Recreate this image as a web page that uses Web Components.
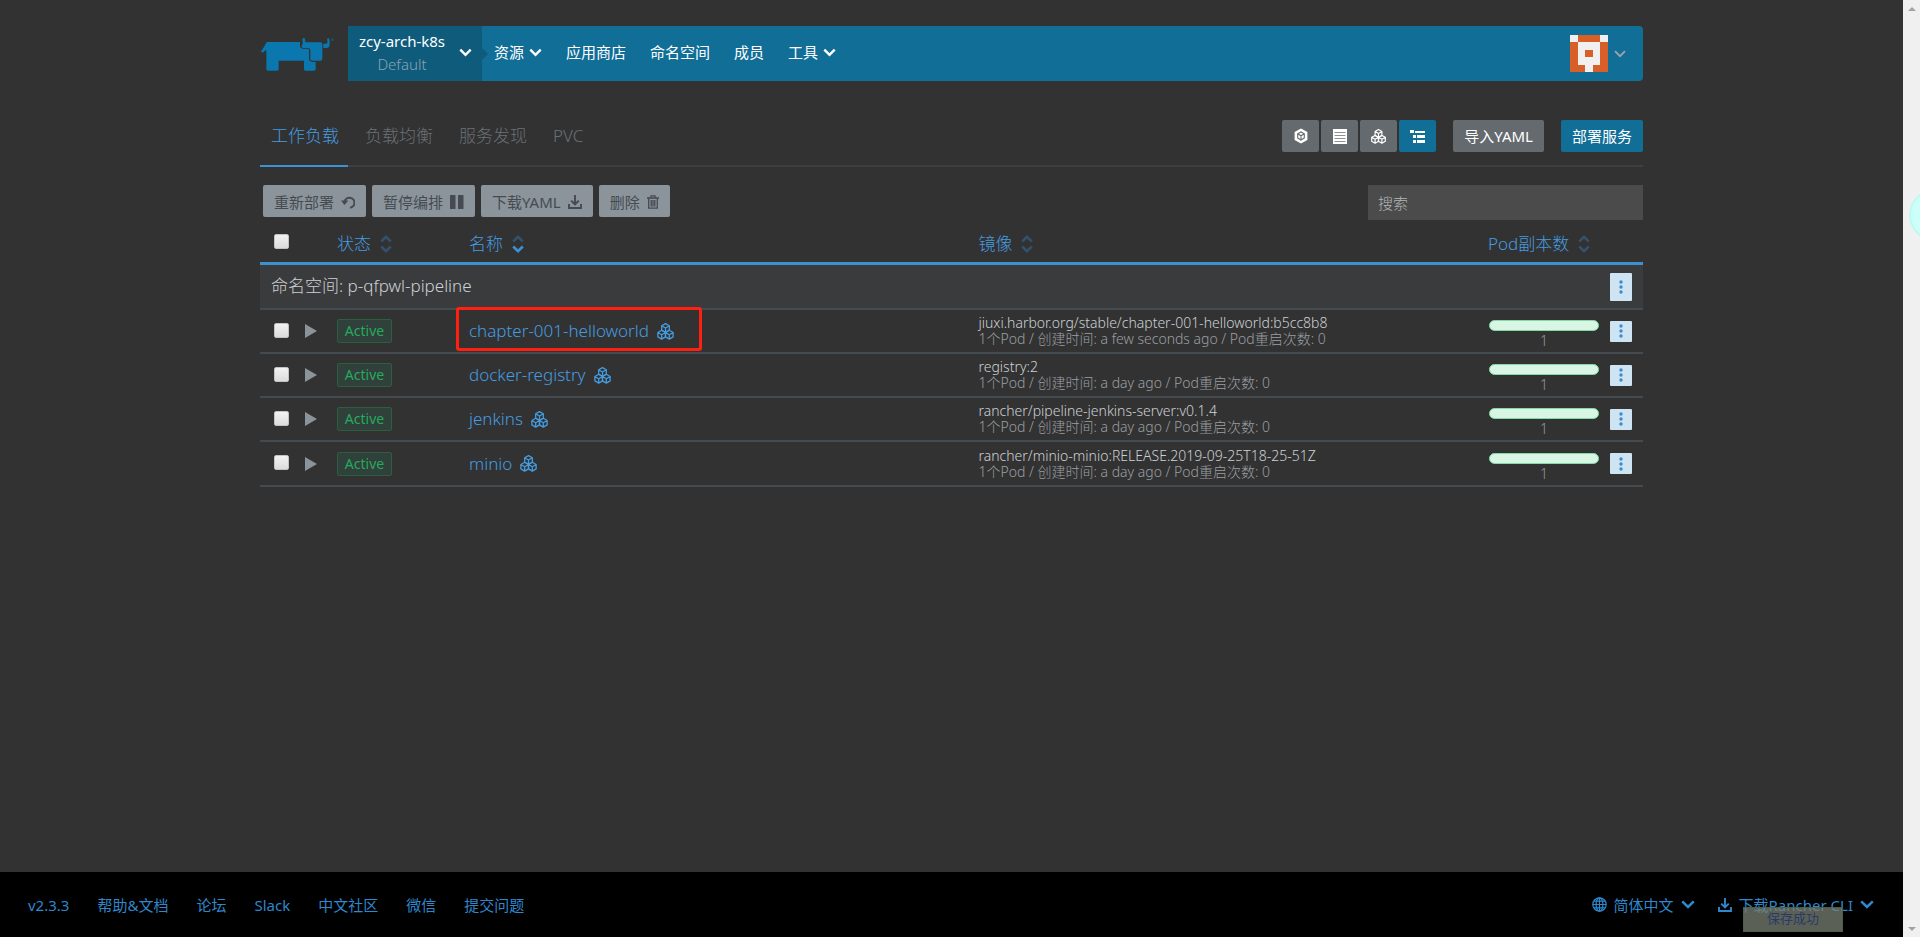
<!DOCTYPE html>
<html lang="zh-CN">
<head>
<meta charset="utf-8">
<title>Rancher</title>
<style>
html,body{margin:0;background:#323232}
body{font-family:"Noto Sans","Noto Sans CJK SC",sans-serif;font-size:15px;font-weight:300;color:#ccd1d4}
</style>
</head>
<body>
<rk-shell>
  <rk-header slot="head"></rk-header>
  <rk-tabs slot="head"></rk-tabs>
  <rk-toolbar slot="main"></rk-toolbar>
  <rk-table slot="main"></rk-table>
  <rk-footer slot="foot"></rk-footer>
  <rk-toast slot="foot">保存成功</rk-toast>
</rk-shell>
<script>
const hexCube = (x, y, r) => {
  const w = r * 0.87;
  return `<path d="M${x} ${y-r}L${x+w} ${y-r/2}V${y+r/2}L${x} ${y+r}L${x-w} ${y+r/2}V${y-r/2}ZM${x-w} ${y-r/2}L${x} ${y}L${x+w} ${y-r/2}M${x} ${y}V${y+r}"/>`;
};
const ICONS = {
  down: ['0 0 13 9', '<path d="M1.3 1.6L6.5 6.8L11.7 1.6" fill="none" stroke="currentColor" stroke-width="2.4"/>'],
  wide: ['0 0 14 9', '<path d="M1.2 1.4L7 7L12.8 1.4" fill="none" stroke="currentColor" stroke-width="2.6"/>'],
  thin: ['0 0 12 8', '<path d="M1 1.2L6 6.2L11 1.2" fill="none" stroke="currentColor" stroke-width="1.9"/>'],
  cubes: ['0 0 17 17', `<g fill="none" stroke="currentColor" stroke-width="1.3" stroke-linejoin="round">${hexCube(8.5,5,4.4)}${hexCube(4.7,11.7,4.4)}${hexCube(12.3,11.7,4.4)}</g>`],
  cubesm: ['0 0 15 15', `<g fill="none" stroke="currentColor" stroke-width="1.2" stroke-linejoin="round">${hexCube(7.5,4.5,3.9)}${hexCube(4.1,10.3,3.9)}${hexCube(10.9,10.3,3.9)}</g>`],
  cube: ['0 0 14 16', '<path fill="currentColor" d="M7 .6L13.4 4V12L7 15.4L.6 12V4Z"/><path fill="none" stroke="#646a6e" stroke-width="1.1" d="M7 4L10.3 5.8V10L7 12L3.7 10V5.8ZM3.7 5.8L7 7.8L10.3 5.8M7 7.8V12"/>'],
  list: ['0 0 14 15', '<path fill="currentColor" d="M0 0H14V15H0Z"/><path stroke="#8b9093" d="M1.5 3.5H12.5M1.5 6.5H12.5M1.5 9.5H12.5M1.5 12.5H12.5"/>'],
  tree: ['0 0 15 13', '<path fill="currentColor" d="M0 0H4V3H0ZM5 1H15V3H5ZM3 5H6V8H3ZM7 5H15V8H7ZM3 10H6V13H3ZM7 10H15V13H7Z"/>'],
  undo: ['0 0 14 13', '<path d="M3.6 5.5A5 5 0 1 1 9 11.7" fill="none" stroke="currentColor" stroke-width="2"/><path fill="currentColor" d="M0 4.6H7.4L3.4 9Z"/>'],
  pause: ['0 0 14 14', '<path fill="currentColor" d="M0 0H5.5V14H0ZM8 0H13.5V14H8Z"/>'],
  save: ['0 0 14 14', '<path d="M1 9V13H13V9M7 0V9M3.2 5.6L7 9.3L10.8 5.6" fill="none" stroke="currentColor" stroke-width="1.9"/>'],
  trash: ['0 0 12 14', '<path d="M0 3H12M4 2.6V.8H8V2.6M1.7 3.5V13.2H10.3V3.5M4.2 5V11.5M6 5V11.5M7.8 5V11.5" fill="none" stroke="currentColor" stroke-width="1.3"/>'],
  globe: ['0 0 15 15', '<g fill="none" stroke="currentColor" stroke-width="1.2"><circle cx="7.5" cy="7.5" r="6.7"/><ellipse cx="7.5" cy="7.5" rx="3.4" ry="6.7"/><path d="M7.5 .8V14.2M.8 7.5H14.2M1.8 4.2H13.2M1.8 10.8H13.2"/></g>'],
  dots: ['0 0 4 14', '<g fill="currentColor"><circle cx="2" cy="2" r="1.7"/><circle cx="2" cy="7" r="1.7"/><circle cx="2" cy="12" r="1.7"/></g>'],
  play: ['0 0 12 14', '<path fill="currentColor" d="M0 0L12 7L0 14Z"/>'],
  sort: ['0 0 12 18', '<g fill="none" stroke="currentColor" stroke-width="2.6"><path class="up" d="M1.2 6.5L6 1.9L10.8 6.5"/><path class="dn" d="M1.2 11.5L6 16.1L10.8 11.5"/></g>']
};
const base = `<style>
*{box-sizing:border-box}
a{color:inherit;text-decoration:none}
button{font:inherit;color:inherit;background:none;border:0;padding:0;margin:0;cursor:pointer}
</style>`;
function define(name, html) {
  const tpl = document.createElement('template');
  tpl.innerHTML = base + html;
  customElements.define(name, class extends HTMLElement {
    constructor() {
      super();
      this.attachShadow({mode: 'open'}).append(tpl.content.cloneNode(true));
    }
  });
}

customElements.define('rk-icon', class extends HTMLElement {
  connectedCallback() {
    if (this.shadowRoot) return;
    const [box, art] = ICONS[this.getAttribute('name')];
    const [, , w, h] = box.split(' ');
    this.attachShadow({mode: 'open'}).innerHTML = `<style>
      :host{display:inline-block;flex:none;line-height:0}
      svg{display:block}
      .up{stroke:var(--up,currentColor)}
    </style><svg width="${w}" height="${h}" viewBox="${box}" aria-hidden="true">${art}</svg>`;
  }
});

define('rk-shell', `<style>
:host{display:flex;min-height:100vh;position:relative;overflow:hidden}
.app{flex:1;min-width:0;display:flex;flex-direction:column}
.wrap{width:100%;max-width:1383px;margin:0 auto;flex:1}
.bar{width:17px;background:#f0f0f0;display:flex;flex-direction:column;justify-content:space-between;align-items:center;padding:7px 0 6px}
.bubble{position:absolute;right:-37px;top:190px;width:48px;height:50px;border-radius:50%;background:#cbfff8;border:2px solid #bdfaf2;box-sizing:border-box}
.foot{position:relative}
</style>
<div class="app">
  <div class="wrap"><slot name="head"></slot><main><slot name="main"></slot></main></div>
  <div class="foot"><slot name="foot"></slot></div>
</div>
<div class="bar" aria-hidden="true">
  <svg width="8" height="4"><path d="M0 4L4 0L8 4Z" fill="#a3a3a3"/></svg>
  <svg width="8" height="4"><path d="M0 0L4 4L8 0Z" fill="#a3a3a3"/></svg>
</div>
<div class="bubble"></div>`);

define('rk-header', `<style>
:host{display:flex;padding-top:26px;color:#fff;font-weight:400}
.logo{width:88px;height:55px;display:flex;align-items:center}
.nav{flex:1;display:flex;background:#116e97;border-radius:0 4px 4px 0;height:55px;padding-right:17px;align-items:center}
.cluster{position:relative;width:134px;height:55px;background:#0f5b7c;display:flex;align-items:center;padding:0 0 2px 9px;gap:12px;line-height:23px;text-align:center}
.cluster small{display:block;font-size:15px;font-weight:300;color:#8ba3b1}
.cluster::after{content:"";position:absolute;left:100%;top:22px;border:6px solid transparent;border-left-color:#0f5b7c;border-right:0}
nav{flex:1;display:flex;gap:24px;padding:0 0 3px 12px}
nav a,nav button{display:flex;align-items:center;gap:5px;line-height:22px}
.user{display:flex;align-items:center;gap:6px;color:#9aa5ab}
.name{width:90px;white-space:nowrap}
</style>
<a class="logo" href="#" aria-label="Rancher"><svg width="75" height="34" viewBox="30 64 225 102"><g fill="#0a78ae">
<path d="M50 79H150V92Q151 98 158 99H174Q179 100 177 108V130Q178 138 186 139H197V160Q197 165 192 165H167Q162 165 162 160V135H86V160Q86 165 81 165H54Q49 165 49 160V104Q45 104 40 110Q36 112 33 107Q37 101 42 94Z"/>
<path d="M160 66L165 69L166 80H211Q217 80 217 86V129Q217 135 211 135H187Q181 135 181 129V103Q180 97 173 97H160Q154 96 154 91Q160 85 157 72Z"/>
<path d="M220 84H229Q235 82 231 70L236 66Q239 75 239 82Q240 96 231 97H220Z"/></g>
<circle cx="247" cy="72" r="3" fill="none" stroke="#0a6996" stroke-width="2"/></svg></a>
<div class="nav">
<button class="cluster"><span class="name">zcy-arch-k8s<small>Default</small></span><rk-icon name="down"></rk-icon></button>
<nav><button>资源<rk-icon name="down"></rk-icon></button><a href="#">应用商店</a><a href="#">命名空间</a><a href="#">成员</a><button>工具<rk-icon name="down"></rk-icon></button></nav>
<button class="user" aria-label="用户"><svg width="38" height="37" viewBox="0 0 5 5" preserveAspectRatio="none" shape-rendering="crispEdges"><path fill="#f0f0f0" d="M0 0H5V5H0Z"/><path fill="#d95f28" d="M1 0H4V1H1ZM0 1H1V4H2V5H0ZM4 1H5V5H3V4H4ZM2 2H3V3H2Z"/></svg><rk-icon name="thin"></rk-icon></button>
</div>`);

define('rk-tabs', `<style>
:host{display:flex;box-sizing:border-box;height:86px;border-bottom:2px solid #3f3f3f;justify-content:space-between}
nav{display:flex;gap:6px;font-size:17px;color:#6a7175}
nav a{height:86px;padding:42px 9px 0 11px;line-height:26px;border-bottom:2px solid transparent}
nav a.on{color:#459ce0;border-color:#3d91d1}
.acts{display:flex;padding-top:39px;color:#fff;font-weight:400}
button{height:32px;background:#646a6e;border-radius:2px;line-height:22px;display:flex;align-items:center;justify-content:center}
.views{display:flex;gap:2px}
.views button{width:37px}
button.on{background:#116e97}
.txt{padding:0 11px;margin-left:17px}
</style>
<nav><a class="on" href="#">工作负载</a><a href="#">负载均衡</a><a href="#">服务发现</a><a href="#">PVC</a></nav>
<div class="acts"><div class="views">
<button aria-label="容器"><rk-icon name="cube"></rk-icon></button><button aria-label="列表"><rk-icon name="list"></rk-icon></button><button aria-label="工作负载"><rk-icon name="cubesm"></rk-icon></button><button class="on" aria-label="分组"><rk-icon name="tree"></rk-icon></button></div>
<button class="txt">导入YAML</button><button class="txt on">部署服务</button></div>`);

define('rk-toolbar', `<style>
:host{display:flex;justify-content:space-between;padding:18px 0 0 3px}
.acts{display:flex;gap:6px}
.acts button{height:32px;background:#8b949b;border-radius:2px;color:#454b50;font-weight:400;padding:0 11px;display:flex;align-items:center;gap:7px}
.acts rk-icon{margin-top:2px}
input{width:275px;height:35px;border:0;background:#4b4b4b;padding:0 10px;font:inherit;color:#c4c9cc;border-radius:0}
input::placeholder{color:#b2b7b9;opacity:1}
</style>
<div class="acts"><button>重新部署<rk-icon name="undo"></rk-icon></button><button>暂停编排<rk-icon name="pause"></rk-icon></button><button>下载YAML<rk-icon name="save"></rk-icon></button><button>删除<rk-icon name="trash"></rk-icon></button></div>
<input type="search" placeholder="搜索" aria-label="搜索">`);

const ROWS = [
  ['chapter-001-helloworld', 'jiuxi.harbor.org/stable/chapter-001-helloworld:b5cc8b8', 'a few seconds ago', true],
  ['docker-registry', 'registry:2', 'a day ago'],
  ['jenkins', 'rancher/pipeline-jenkins-server:v0.1.4', 'a day ago'],
  ['minio', 'rancher/minio-minio:RELEASE.2019-09-25T18-25-51Z', 'a day ago']
];
define('rk-table', `<style>
:host{display:block}
table{width:100%;table-layout:fixed;border-collapse:separate;border-spacing:0}
th,td{padding:0;text-align:left;font-weight:300;vertical-align:middle}
.c1{width:45px}.c2{width:32px}.c3{width:132px}.c6{width:122px}.c7{width:33px}
thead th{height:45px;border-bottom:3px solid #3d91d1;color:#459ce0;font-size:17px}
th button{display:flex;align-items:center;gap:9px;line-height:24px;white-space:nowrap;margin-top:6px}
th rk-icon{color:#34506a;--up:#34506a}
th .sorted{color:#3d91d1}
th input{margin-top:2px}
tbody td{height:44px;border-bottom:2px solid #434a50}
tbody tr:last-child td{height:45px}
.group td{height:45px;background:#3a3b3d;font-size:17px;line-height:24px}
.group td:first-child{padding:0 0 2px 11px}
input{appearance:none;display:block;width:15px;height:15px;margin:0 0 2px 14px;border-radius:2px;background:linear-gradient(#f2f2f2,#dcdcdc);border:1px solid #c3c3c3}
.play{color:#8b949b;display:block;margin-top:2px}
.badge{display:block;width:55px;height:24px;line-height:21px;text-align:center;border:1px solid #2c5f40;border-radius:2px;background:#30403a;color:#27aa5e;font-size:14px;font-weight:400}
.name{position:relative;display:inline-flex;align-items:center;gap:8px;color:#459ce0;font-size:17px;line-height:24px}
.mark::after{content:"";position:absolute;inset:-12px -28px -8px -13px;border:3px solid #ff2012;border-radius:3px;pointer-events:none}
.img{font-size:14px;line-height:16px;white-space:nowrap}
.img small{display:block;font-size:14px;color:#9a9fa2}
.pods{width:110px;margin:8px 0 0 1px;text-align:center;font-size:14px;line-height:18px;color:#8f999f}
.pods i{display:block;height:11px;border-radius:6px;background:#d9f6e5;border:1px solid #7fdca6;margin-bottom:1px}
.kebab{display:flex;align-items:center;justify-content:center;width:22px;height:21px;background:#cfe4f3;color:#3d8bc9;border-radius:1px}
.group .kebab{height:28px}
</style>
<table>
<colgroup><col class="c1"><col class="c2"><col class="c3"><col><col><col class="c6"><col class="c7"></colgroup>
<thead><tr><th><input type="checkbox" aria-label="全选"></th><th></th>
<th><button>状态<rk-icon name="sort"></rk-icon></button></th><th><button>名称<rk-icon class="sorted" name="sort"></rk-icon></button></th><th><button>镜像<rk-icon name="sort"></rk-icon></button></th><th colspan="2"><button>Pod副本数<rk-icon name="sort"></rk-icon></button></th></tr></thead>
<tbody><tr class="group"><td colspan="6">命名空间: p-qfpwl-pipeline</td><td><button class="kebab" aria-label="操作"><rk-icon name="dots"></rk-icon></button></td></tr>
${ROWS.map(([n, img, age, mark]) => `<tr><td><input type="checkbox" aria-label="${n}"></td><td><button class="play" aria-label="展开"><rk-icon name="play"></rk-icon></button></td><td><span class="badge">Active</span></td><td><a href="#" class="name${mark ? ' mark' : ''}">${n}<rk-icon name="cubes"></rk-icon></a></td><td><div class="img">${img}<small>1个Pod / 创建时间: ${age} / Pod重启次数: 0</small></div></td><td><div class="pods"><i></i>1</div></td><td><button class="kebab" aria-label="操作"><rk-icon name="dots"></rk-icon></button></td></tr>`).join('')}
</tbody></table>`);

define('rk-footer', `<style>
:host{display:flex;box-sizing:border-box;justify-content:space-between;align-items:center;height:65px;background:#000;color:#2f87cc;padding:0 29px 0 28px;font-size:15px;font-weight:400;line-height:22px}
nav,div{display:flex;gap:28px}
div{gap:23px}
button{display:flex;align-items:center;gap:7px}
</style>
<nav><a href="#">v2.3.3</a><a href="#">帮助&amp;文档</a><a href="#">论坛</a><a href="#">Slack</a><a href="#">中文社区</a><a href="#">微信</a><a href="#">提交问题</a></nav>
<div><button><rk-icon name="globe"></rk-icon>简体中文<rk-icon name="wide"></rk-icon></button><button><rk-icon name="save"></rk-icon>下载Rancher CLI<rk-icon name="wide"></rk-icon></button></div>`);

define('rk-toast', `<style>
:host{position:absolute;right:60px;bottom:5px;width:100px;height:25px;line-height:21px;text-align:center;font-size:13px;font-weight:400;color:#2a3a66;background:rgba(120,126,115,.76);border:1px solid #4a5f45;box-sizing:border-box}
</style><slot></slot>`);
</script>
</body>
</html>
